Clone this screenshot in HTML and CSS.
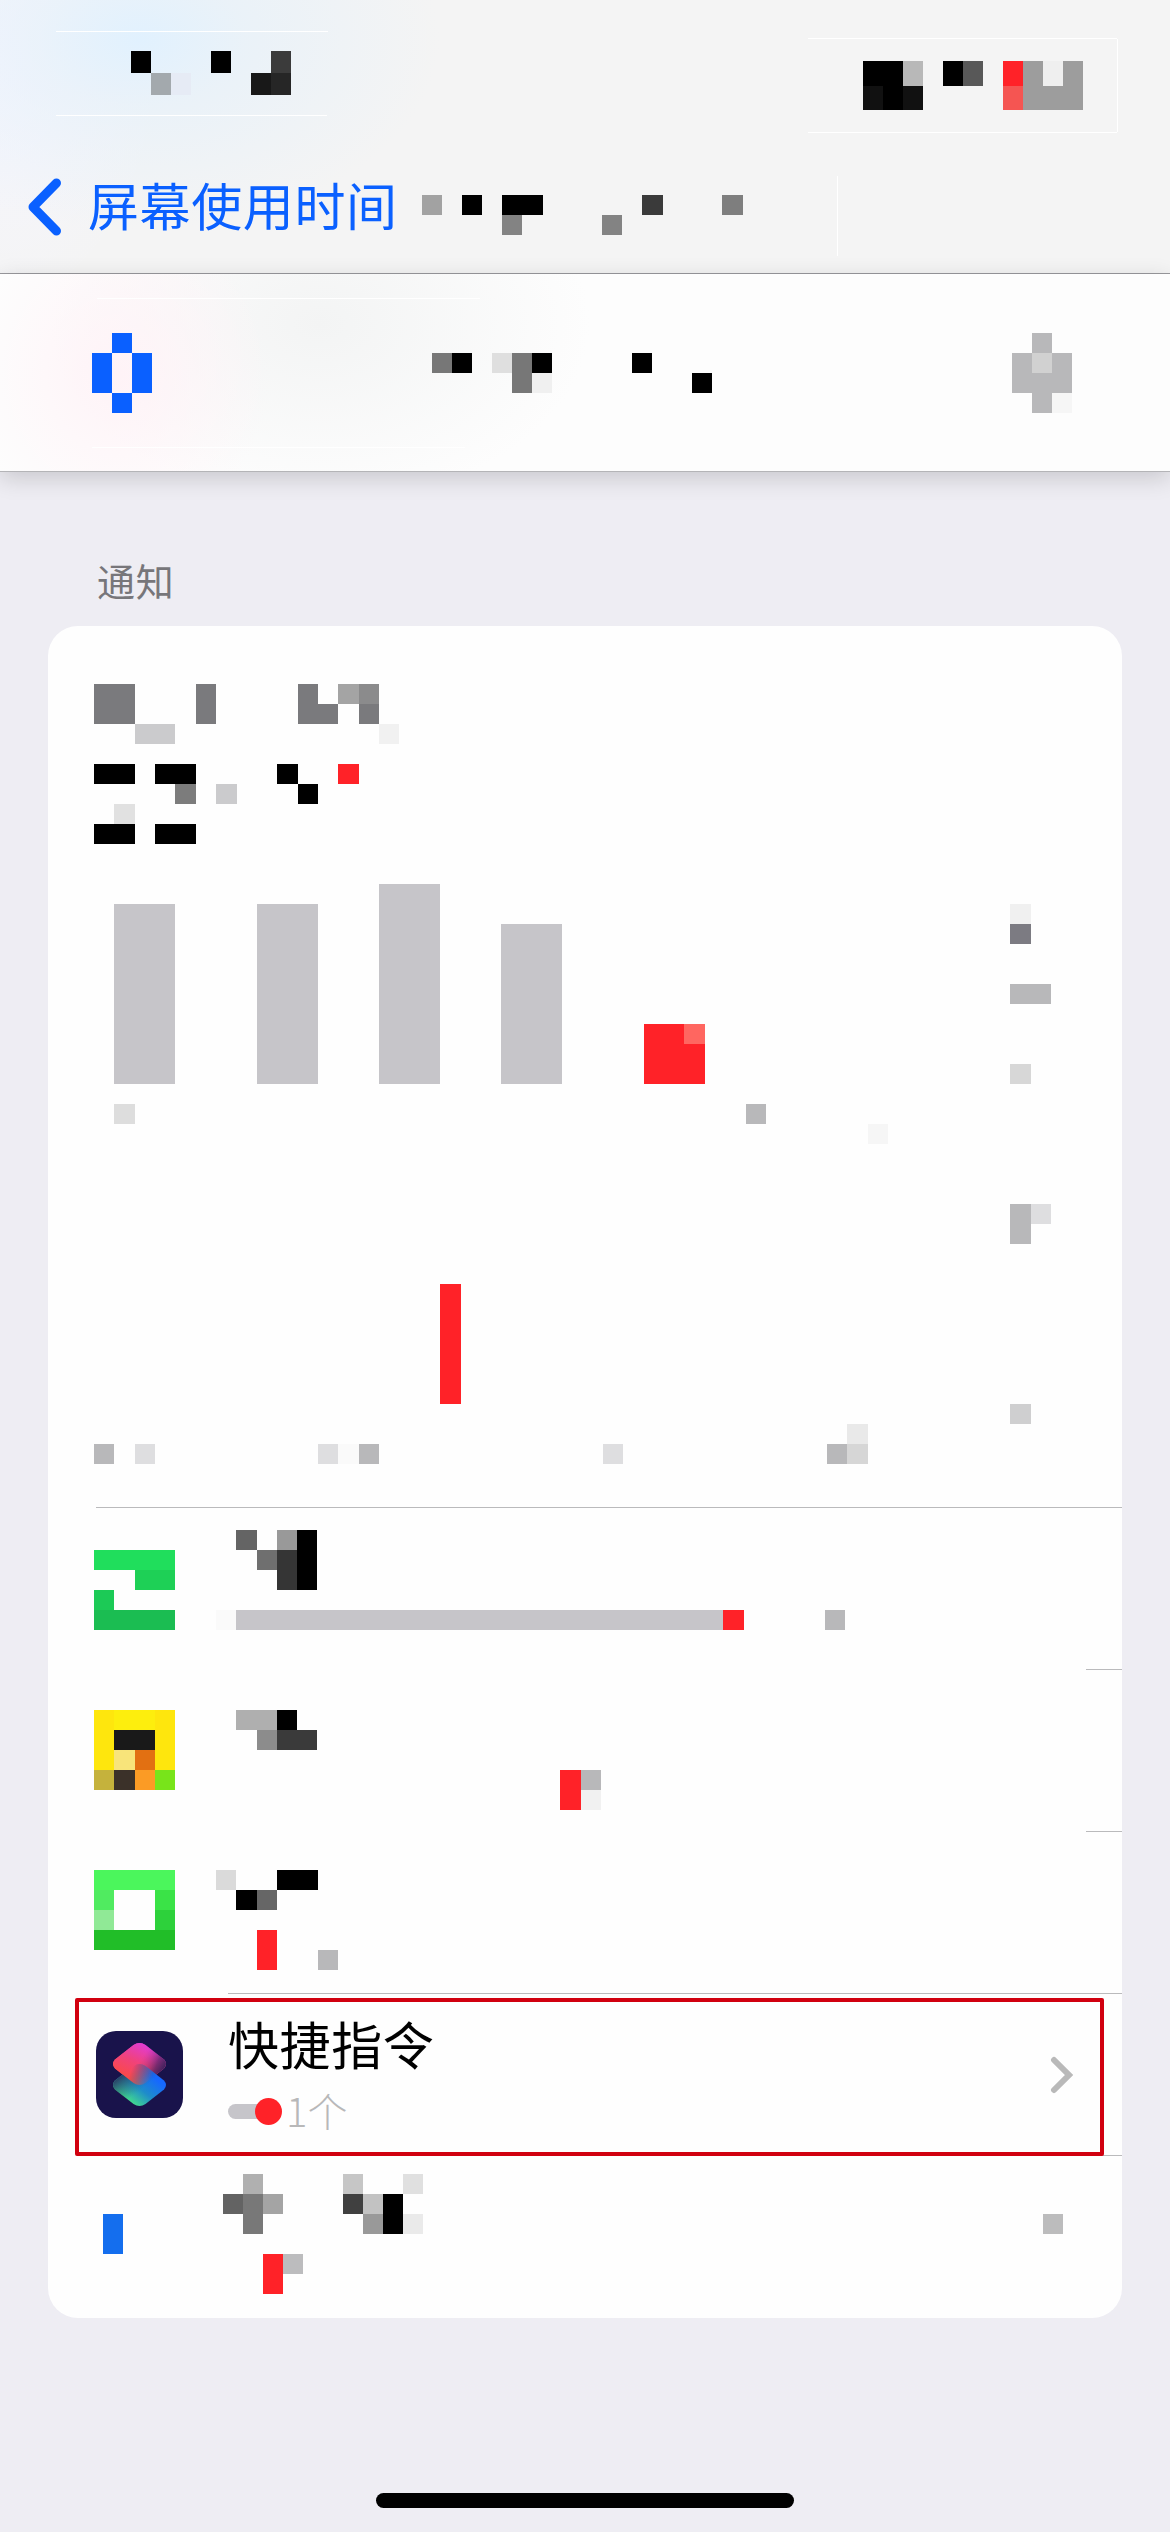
FILE: index.html
```html
<!DOCTYPE html>
<html lang="zh-CN">
<head>
<meta charset="utf-8">
<title>屏幕使用时间</title>
<link rel="stylesheet" href="styles.css">
</head>
<body>
<div class="screen">
  <header class="top">
    <div class="status">
      <svg class="mosaic" width="272" height="86" viewBox="56 31 272 86">
        <path class="edge" d="M56 31h272v1H56zM55 115h272v1H56z"/>
        <path d="M131 51h20v22h-20zM211 51h20v22h-20z"/>
        <path fill="#a3a9ad" d="M151 73h20v22h-20z"/>
        <path fill="#e6ebf5" d="M171 73h20v22h-20z"/>
        <path fill="#3b3b3b" d="M271 51h20v22h-20z"/>
        <path fill="#181818" d="M251 73h20v22h-20z"/>
        <path fill="#262626" d="M271 73h20v22h-20z"/>
      </svg>
      <svg class="mosaic" width="310" height="98" viewBox="808 37 310 98">
        <path class="edge" d="M808 38h309v1H808zM808 132h309v1H808zM1117 39h1v93h-1z"/>
        <path d="M863 61h40v25h20v24h-60zM943 61h20v25h-20z"/>
        <path fill="#111" d="M863 86h20v24h-20zM903 86h20v24h-20z"/>
        <path fill="#b8b8b8" d="M903 61h20v25h-20z"/>
        <path fill="#585858" d="M963 61h20v25h-20z"/>
        <path fill="#ff2228" d="M1003 61h20v25h-20z"/>
        <path fill="#f55552" d="M1003 86h20v24h-20z"/>
        <path fill="#9d9d9d" d="M1023 61h60v49h-60z"/>
        <path fill="#efefef" d="M1043 61h20v25h-20z"/>
      </svg>
    </div>
    <nav class="nav">
      <svg class="back" width="34" height="58" viewBox="0 0 34 58"><path d="M28.500 5 5 29l23.500 24"/></svg>
      <span class="nav-title">屏幕使用时间</span>
      <svg class="mosaic" width="416" height="80" viewBox="422 176 416 80">
        <path class="edge" d="M837 176h1v80h-1z"/>
        <path fill="#a2a2a2" d="M422 195h20v20h-20z"/>
        <path d="M462 195h20v20h-20zM502 195h41v20h-41z"/>
        <path fill="#838383" d="M502 215h20v20h-20zM602 215h20v20h-20z"/>
        <path fill="#3a3a3a" d="M642 195h21v20h-21z"/>
        <path fill="#7e7e7e" d="M722 195h21v20h-21z"/>
      </svg>
    </nav>
  </header>

  <div class="datebar">
    <svg class="mosaic" width="60" height="80" viewBox="0 0 3 4"><path fill="#0a60ff" d="M1 0h1v1h1v2H2v1H1V3H0V1h1zM1 1v2h1V1z" fill-rule="evenodd"/></svg>
    <svg class="mosaic" width="280" height="80" viewBox="0 0 14 4">
      <path d="M1 1h1v1H1zM5 1h1v1H5zM10 1h1v1h-1zM13 2h1v1h-1z"/>
      <path fill="#777" d="M0 1h1v1H0zM4 1h1v2H4z"/>
      <path fill="#dfdfdf" d="M3 1h1v1H3z"/>
      <path fill="#f0f0f0" d="M5 2h1v1H5z"/>
    </svg>
    <svg class="mosaic" width="60" height="80" viewBox="0 0 3 4">
      <path fill="#b8b8ba" d="M1 0h1v1h1v2H2v1H1V3H0V1h1z"/>
      <path fill="#d1d1d1" d="M1 1h1v1H1z"/>
      <path fill="#f6f6f6" d="M2 3h1v1H2z"/>
    </svg>
  </div>

  <main class="content">
    <h2 class="section-title">通知</h2>
    <div class="card">
      <section class="report">
        <svg class="mosaic" width="957" height="160" viewBox="0 0 47 8" preserveAspectRatio="none">
          <path fill="#7a7a7d" d="M0 0h2v2H0zM5 0h1v2H5zM10 0h1v1h1v1h-2zM13 1h1v1h-1z"/>
          <path fill="#a4a4a4" d="M12 0h1v1h-1z"/><path fill="#8b8b8c" d="M13 0h1v1h-1z"/>
          <path fill="#cbcbcd" d="M2 2h2v1H2zM6 5h1v1H6z"/><path fill="#f1f1f1" d="M14 2h1v1h-1z"/>
          <path d="M0 4h2v1H0zM3 4h2v1H3zM9 4h1v1H9zM10 5h1v1h-1zM0 7h2v1H0zM3 7h2v1H3z"/>
          <path fill="#ff2228" d="M12 4h1v1h-1z"/>
          <path fill="#7c7c7c" d="M4 5h1v1H4z"/><path fill="#e1e1e1" d="M1 6h1v1H1z"/>
        </svg>
        <svg class="mosaic" width="957" height="300" viewBox="0 8 47 15" preserveAspectRatio="none">
          <path fill="#c6c5c9" d="M1 11h3v9H1zM8 11h3v9H8zM14 10h3v10h-3zM20 12h3v8h-3z"/>
          <path fill="#ff2228" d="M27 17h3v3h-3z"/><path fill="#ff6660" d="M29 17h1v1h-1z"/>
          <path fill="#ddd" d="M1 21h1v1H1z"/><path fill="#d7d7d7" d="M45 19h1v1h-1z"/>
          <path fill="#b8b8ba" d="M32 21h1v1h-1zM45 15h2v1h-2z"/>
          <path fill="#f6f6f6" d="M38 22h1v1h-1z"/><path fill="#f0f0f0" d="M45 11h1v1h-1z"/>
          <path fill="#7c7b82" d="M45 12h1v1h-1z"/>
        </svg>
        <svg class="mosaic" width="957" height="320" viewBox="0 23 47 16" preserveAspectRatio="none">
          <path fill="#ff2228" d="M17 30h1v6h-1z"/>
          <path fill="#b8b8ba" d="M45 26h1v2h-1zM0 38h1v1H0zM13 38h1v1h-1zM36 38h1v1h-1z"/>
          <path fill="#dedee0" d="M46 26h1v1h-1zM2 38h1v1H2zM11 38h1v1h-1zM25 38h1v1h-1z"/>
          <path fill="#cfcfd0" d="M45 36h1v1h-1z"/><path fill="#d6d6d6" d="M37 38h1v1h-1z"/>
          <path fill="#e9e9e9" d="M37 37h1v1h-1z"/><path fill="#fafafa" d="M12 38h1v1h-1z"/>
        </svg>
      </section>
      <ul class="apps">
        <li class="app app-first">
          <svg class="mosaic" width="81" height="100" viewBox="0 0 4 5" preserveAspectRatio="none">
            <path fill="#20de5c" d="M0 1h4v1H0z"/><path fill="#1ed056" d="M2 2h2v1H2z"/>
            <path fill="#1cca56" d="M0 3h1v1H0z"/><path fill="#1bbd52" d="M0 4h4v1H0z"/>
          </svg>
          <svg class="mosaic" width="629" height="100" viewBox="6 0 31 5" preserveAspectRatio="none">
            <path fill="#646464" d="M7 0h1v1H7z"/><path fill="#999" d="M9 0h1v1H9z"/><path d="M10 0h1v3h-1z"/>
            <path fill="#6f6f6f" d="M8 1h1v1H8z"/><path fill="#353535" d="M9 1h1v2H9z"/>
            <path fill="#fafafa" d="M6 4h1v1H6z"/><path fill="#c6c5c9" d="M7 4h24v1H7z"/>
            <path fill="#ff2228" d="M31 4h1v1h-1z"/><path fill="#b8b8ba" d="M36 4h1v1h-1z"/>
          </svg>
        </li>
        <li class="app app-second">
          <svg class="mosaic" width="81" height="80" viewBox="0 0 4 4" preserveAspectRatio="none">
            <path fill="#fee60d" d="M0 0h4v4H0z"/><path fill="#fdee0d" d="M1 0h2v1H1z"/>
            <path fill="#191919" d="M1 1h2v1H1z"/><path fill="#f8e47a" d="M1 2h1v1H1z"/>
            <path fill="#e27012" d="M2 2h1v1H2z"/><path fill="#c5b23c" d="M0 3h1v1H0z"/>
            <path fill="#3b3129" d="M1 3h1v1H1z"/><path fill="#fb9b25" d="M2 3h1v1H2z"/><path fill="#78e41a" d="M3 3h1v1H3z"/>
          </svg>
          <svg class="mosaic" width="385" height="100" viewBox="6 0 19 5" preserveAspectRatio="none">
            <path fill="#afafaf" d="M7 0h2v1H7z"/><path d="M9 0h1v1H9z"/>
            <path fill="#8c8c8c" d="M8 1h1v1H8z"/><path fill="#3a3a3a" d="M9 1h2v1H9z"/>
            <path fill="#ff2228" d="M23 3h1v2h-1z"/><path fill="#b8b8ba" d="M24 3h1v1h-1z"/><path fill="#f1f1f1" d="M24 4h1v1h-1z"/>
          </svg>
        </li>
        <li class="app app-third">
          <svg class="mosaic" width="81" height="80" viewBox="0 0 4 4" preserveAspectRatio="none">
            <path fill="#4bf65c" d="M0 0h4v1H0z"/><path fill="#50eb60" d="M0 1h1v1H0z"/><path fill="#3ae347" d="M3 1h1v1H3z"/>
            <path fill="#90e996" d="M0 2h1v1H0z"/><path fill="#2dd13b" d="M3 2h1v1H3z"/><path fill="#21be28" d="M0 3h4v1H0z"/>
          </svg>
          <svg class="mosaic" width="122" height="100" viewBox="6 0 6 5" preserveAspectRatio="none">
            <path fill="#dadada" d="M6 0h1v1H6z"/><path d="M9 0h2v1H9zM7 1h1v1H7z"/><path fill="#666" d="M8 1h1v1H8z"/>
            <path fill="#ff2228" d="M8 3h1v2H8z"/><path fill="#b8b8ba" d="M11 4h1v1h-1z"/>
          </svg>
        </li>
        <li class="app app-shortcuts">
          <svg class="shortcuts-icon" width="87" height="87" viewBox="0 0 87 87">
            <defs>
              <path id="diamond" d="M37.500 14q6-4 12 0L68 28.500q4 4.500 0 9L49.500 52q-6 4-12 0L19 37.500q-4-4.500 0-9z"/>
              <linearGradient id="pink" gradientUnits="userSpaceOnUse" x1="32" y1="48" x2="48" y2="13"><stop offset="0" stop-color="#fb4a45"/><stop offset=".5" stop-color="#f0427c"/><stop offset="1" stop-color="#e13cd2"/></linearGradient>
              <linearGradient id="shade" gradientUnits="userSpaceOnUse" x1="46" y1="26" x2="66" y2="39"><stop offset="0" stop-color="#47225f" stop-opacity="0"/><stop offset="1" stop-color="#47225f"/></linearGradient>
              <linearGradient id="blue" gradientUnits="userSpaceOnUse" x1="38" y1="75" x2="60" y2="48"><stop offset="0" stop-color="#43dc8b"/><stop offset=".5" stop-color="#1e8cca"/><stop offset="1" stop-color="#1668ff"/></linearGradient>
              <linearGradient id="dim" gradientUnits="userSpaceOnUse" x1="24" y1="46" x2="38" y2="64"><stop offset="0" stop-color="#2a4468"/><stop offset="1" stop-color="#2a6f80" stop-opacity="0"/></linearGradient>
              <linearGradient id="fade" gradientUnits="userSpaceOnUse" x1="36" y1="38" x2="56" y2="46"><stop offset="0" stop-color="#fff"/><stop offset="1" stop-color="#000"/></linearGradient>
              <mask id="front" maskUnits="userSpaceOnUse" x="0" y="0" width="87" height="87"><path fill="url(#fade)" d="M0 0h87v87H0z"/></mask>
            </defs>
            <rect width="87" height="87" rx="20" fill="#19134b"/>
            <use href="#diamond" fill="url(#pink)"/>
            <use href="#diamond" fill="url(#shade)"/>
            <path fill="url(#blue)" d="M37.500 35q6-4 12 0L68 49.500q4 4.500 0 9L49.500 73q-6 4-12 0L19 58.500q-4-4.500 0-9z"/>
            <path fill="url(#dim)" d="M37.500 35q6-4 12 0L68 49.500q4 4.500 0 9L49.500 73q-6 4-12 0L19 58.500q-4-4.500 0-9z"/>
            <g mask="url(#front)"><use href="#diamond" fill="url(#pink)"/></g>
          </svg>
          <div class="app-body">
            <span class="app-name">快捷指令</span>
            <span class="app-usage"><i class="track"></i><i class="dot"></i><span>1个</span></span>
          </div>
          <svg class="chevron" width="24" height="38" viewBox="0 0 24 38"><path d="M4 4l15 15L4 34"/></svg>
          <span class="highlight"></span>
        </li>
        <li class="app app-last">
          <svg class="mosaic" width="20" height="80" viewBox="0 0 1 4"><path fill="#146eee" d="M0 2h1v2H0z"/></svg>
          <svg class="mosaic name" width="200" height="120" viewBox="0 0 10 6">
            <path fill="#b0b0b0" d="M1 0h1v1H1z"/><path fill="#636363" d="M0 1h1v1H0z"/><path fill="#787878" d="M1 1h1v2H1z"/><path fill="#a4a4a4" d="M2 1h1v1H2z"/>
            <path fill="#c6c6c6" d="M6 0h1v1H6z"/><path fill="#404040" d="M6 1h1v1H6z"/><path fill="#c2c2c2" d="M7 1h1v1H7z"/><path fill="#999" d="M7 2h1v1H7z"/>
            <path d="M8 1h1v2H8z"/><path fill="#e0e0e0" d="M9 0h1v1H9z"/><path fill="#eaeaea" d="M9 2h1v1H9z"/>
            <path fill="#ff2228" d="M2 4h1v2H2z"/><path fill="#bcbcbe" d="M3 4h1v1H3z"/>
          </svg>
          <svg class="mosaic end" width="20" height="60" viewBox="0 0 1 3"><path fill="#bcbcbd" d="M0 2h1v1H0z"/></svg>
        </li>
      </ul>
    </div>
  </main>
  <div class="home"></div>
</div>
</body>
</html>
```

FILE: styles.css
```css
* { box-sizing: border-box; }
body { margin: 0; background: #eeedf3; font-family: "Liberation Sans", "Noto Sans CJK SC", sans-serif; }
svg { display: block; flex: none; }
.screen { width: 1170px; height: 2532px; display: flex; flex-direction: column; background: #eeedf3; overflow: hidden; }
.mosaic { shape-rendering: crispEdges; }
.edge { fill: #fff; }

.top {
  height: 274px; flex: none; border-bottom: 1px solid #99999d;
  background:
    radial-gradient(ellipse 300px 190px at 140px 40px, #e1f1fe 0%, rgba(230, 241, 250, .7) 35%, rgba(244, 244, 244, 0) 100%),
    radial-gradient(ellipse 160px 250px at 0 60px, #f6f6ff, rgba(246, 247, 252, 0)),
    #f4f4f4;
}
.status { height: 141px; display: flex; justify-content: space-between; align-items: flex-start; padding: 31px 52px 0 56px; }
.status .mosaic:last-child { margin-top: 6px; }
.nav { height: 132px; display: flex; align-items: flex-start; padding: 35px 0 0 28px; }
.back { margin-top: 2px; }
.back path { fill: none; stroke: #0a60ff; stroke-width: 9; stroke-linecap: round; stroke-linejoin: round; }
.nav-title { width: 334px; margin: 3px 0 0 26px; font-size: 51px; line-height: 60px; letter-spacing: .6px; color: #0a60ff; white-space: nowrap; }

/* faint white hairlines run above and below the date controls */
.datebar {
  height: 198px; flex: none; display: flex; align-items: flex-start; justify-content: space-between;
  padding: 59px 98px 0 92px; border-bottom: 1px solid #b4b4b7; box-shadow: 0 6px 22px rgba(0, 0, 0, .16);
  background:
    linear-gradient(#fff, #fff) 97px 24px / 383px 1px no-repeat,
    linear-gradient(#fff, #fff) 92px 173px / 373px 1px no-repeat,
    radial-gradient(ellipse 150px 160px at 120px 100px, #fff3f7, rgba(255, 245, 248, 0)),
    radial-gradient(ellipse 270px 180px at 320px 50px, #f3f4f4, rgba(246, 247, 247, 0)),
    #fdfdfd;
}
.datebar .mosaic:nth-child(2) { margin-left: 14px; margin-right: 34px; }

.content { padding: 84px 48px 0; }
.section-title { margin: 0 0 10px; padding-left: 49px; height: 60px; font-size: 38px; line-height: 54px; font-weight: 400; letter-spacing: .8px; color: #77767a; }
.card { width: 1074px; height: 1692px; background: #fefefe; border-radius: 30px; overflow: hidden; }
.report { height: 882px; padding: 58px 0 0 46px; background: linear-gradient(#bababc, #bababc) right bottom / 1026px 1px no-repeat; }
.apps { margin: 0; padding: 0; list-style: none; }
.app { height: 162px; display: flex; align-items: flex-start; padding-left: 46px; position: relative; background: linear-gradient(#bababc, #bababc) right bottom / 36px 1px no-repeat; }
.app .mosaic + .mosaic { margin-left: 41px; }
.app-first { padding-top: 22px; }
.app-second { padding-top: 40px; }
.app-third { padding-top: 38px; background-size: 894px 1px; }
.app-shortcuts { padding: 37px 48px 0 48px; }
.app-body { flex: 1; margin: -14px 0 0 45px; display: flex; flex-direction: column; }
.app-name { font-size: 51px; line-height: 62px; letter-spacing: .6px; color: #000; }
.app-usage { display: flex; align-items: center; height: 54px; margin-top: 5px; font-size: 40px; color: #b8b8b9; }
.app-usage span { margin: -3px 0 0 4px; font-family: "Noto Sans CJK SC", sans-serif; font-weight: 300; }
.track { width: 32px; height: 15px; border-radius: 8px 0 0 8px; background: #c6c5ca; }
.dot { width: 27px; height: 27px; margin-left: -5px; border-radius: 50%; background: #ff2228; }
.chevron { margin-top: 25px; }
.chevron path { fill: none; stroke: #b9b9b9; stroke-width: 6; stroke-linecap: round; stroke-linejoin: miter; }
.highlight { position: absolute; left: 27px; top: 4px; width: 1029px; height: 158px; border: 4px solid #d1000f; border-radius: 2px; }
.app-last { padding: 18px 59px 0 55px; background: none; }
.app-last .mosaic.name { margin-left: 100px; }
.app-last .mosaic.end { margin-left: auto; }
.home { width: 418px; height: 15px; margin: 175px auto 0; flex: none; border-radius: 8px; background: #000; }
```
